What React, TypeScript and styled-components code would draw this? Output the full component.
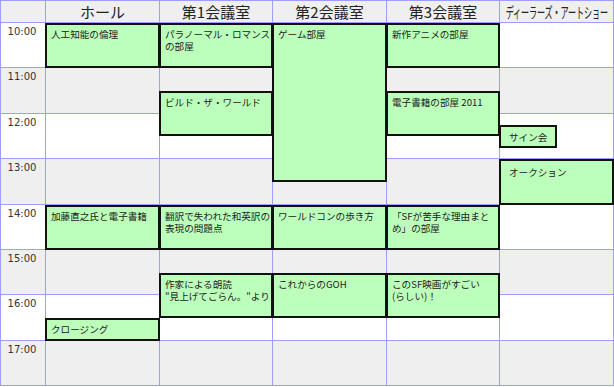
import { FC } from 'react';
import styled, { createGlobalStyle } from 'styled-components';

const GRID_LINE = '#9d9dff';
const SHADE = '#efefef';

const GlobalStyle = createGlobalStyle`
  body {
    margin: 0;
    background: #ffffff;
    font-family: 'Noto Sans CJK JP', 'Noto Sans', sans-serif;
    color: #222222;
  }
`;

const Timetable = styled.div`
  display: grid;
  grid-template-columns: 45px 114px 113px 114px 113px 114px;
  grid-template-rows: 22px repeat(32, minmax(0, 1fr));
  width: 614px;
  height: 386px;
  box-sizing: border-box;
  border-top: 1px solid ${GRID_LINE};
  border-left: 1px solid ${GRID_LINE};
`;

const HeaderCell = styled.div<{ $col: number }>`
  grid-row: 1;
  grid-column: ${(p) => p.$col};
  display: flex;
  align-items: center;
  justify-content: center;
  background: ${SHADE};
  border-right: 1px solid ${GRID_LINE};
  border-bottom: 1px solid ${GRID_LINE};
  font-size: 15px;
  line-height: 21px;
  white-space: nowrap;
`;

const Condensed = styled.span`
  display: inline-block;
  flex-shrink: 0;
  transform: scaleX(0.54);
  letter-spacing: -0.2px;
`;

const SlotCell = styled.div<{ $col: number; $hour: number }>`
  grid-column: ${(p) => p.$col};
  grid-row: ${(p) => 2 + p.$hour * 4} / span 4;
  background: ${(p) => (p.$hour % 2 === 1 ? SHADE : '#ffffff')};
  border-right: 1px solid ${GRID_LINE};
  border-bottom: 1px solid ${GRID_LINE};
`;

const TimeCell = styled(SlotCell)`
  padding: 3px 2px 0 0;
  text-align: center;
  font-family: 'DejaVu Sans', sans-serif;
  font-size: 10px;
  line-height: 12px;
  color: #333333;
`;

const EventCard = styled.div<{
  $col: number;
  $start: number;
  $end: number;
  $roomy?: boolean;
  $fit?: boolean;
}>`
  grid-column: ${(p) => p.$col};
  grid-row: ${(p) => 2 + p.$start} / ${(p) => 2 + p.$end};
  justify-self: ${(p) => (p.$fit ? 'start' : 'stretch')};
  z-index: 1;
  margin-left: -1px;
  box-sizing: border-box;
  padding: ${(p) => (p.$fit ? '4px 8px' : p.$roomy ? '5px 8px' : '3px 4px')};
  background: #bbffbb;
  border: 2px solid #111111;
  font-size: 9.6px;
  white-space: nowrap;
  overflow: hidden;
  color: #222222;
`;

const EventLine = styled.div`
  height: 12px;
  line-height: 12px;
`;

const rooms = ['ホール', '第1会議室', '第2会議室', '第3会議室'];
const hours = ['10:00', '11:00', '12:00', '13:00', '14:00', '15:00', '16:00', '17:00'];

// start / end are in quarter hours from 10:00, col is the grid column
interface Session {
  col: number;
  start: number;
  end: number;
  lines: string[];
  fit?: boolean;
}

const sessions: Session[] = [
  { col: 2, start: 0, end: 4, lines: ['人工知能の倫理'] },
  { col: 3, start: 0, end: 4, lines: ['パラノーマル・ロマンス', 'の部屋'] },
  { col: 4, start: 0, end: 14, lines: ['ゲーム部屋'] },
  { col: 5, start: 0, end: 4, lines: ['新作アニメの部屋'] },
  { col: 3, start: 6, end: 10, lines: ['ビルド・ザ・ワールド'] },
  { col: 5, start: 6, end: 10, lines: ['電子書籍の部屋 2011'] },
  { col: 6, start: 9, end: 11, lines: ['サイン会'], fit: true },
  { col: 6, start: 12, end: 16, lines: ['オークション'] },
  { col: 2, start: 16, end: 20, lines: ['加藤直之氏と電子書籍'] },
  { col: 3, start: 16, end: 20, lines: ['翻訳で失われた和英訳の', '表現の問題点'] },
  { col: 4, start: 16, end: 20, lines: ['ワールドコンの歩き方'] },
  { col: 5, start: 16, end: 20, lines: ['「SFが苦手な理由まと', 'め」の部屋'] },
  { col: 3, start: 22, end: 26, lines: ['作家による朗読', '"見上げてごらん。"より'] },
  { col: 4, start: 22, end: 26, lines: ['これからのGOH'] },
  { col: 5, start: 22, end: 26, lines: ['このSF映画がすごい', '(らしい)！'] },
  { col: 2, start: 26, end: 28, lines: ['クロージング'] },
];

const App: FC = () => (
  <>
    <GlobalStyle />
    <Timetable>
      <HeaderCell $col={1} />
      {rooms.map((room, i) => (
        <HeaderCell key={room} $col={i + 2}>
          {room}
        </HeaderCell>
      ))}
      <HeaderCell $col={6}>
        <Condensed>ディーラーズ・アートショー</Condensed>
      </HeaderCell>

      {hours.map((label, h) => (
        <TimeCell key={label} $col={1} $hour={h}>
          {label}
        </TimeCell>
      ))}
      {hours.map((label, h) =>
        [2, 3, 4, 5, 6].map((col) => (
          <SlotCell key={`${label}-${col}`} $col={col} $hour={h} />
        ))
      )}

      {sessions.map((s) => (
        <EventCard
          key={s.lines.join('')}
          $col={s.col}
          $start={s.start}
          $end={s.end}
          $roomy={s.col === 6}
          $fit={s.fit}
        >
          {s.lines.map((line) => (
            <EventLine key={line}>{line}</EventLine>
          ))}
        </EventCard>
      ))}
    </Timetable>
  </>
);

export default App;
